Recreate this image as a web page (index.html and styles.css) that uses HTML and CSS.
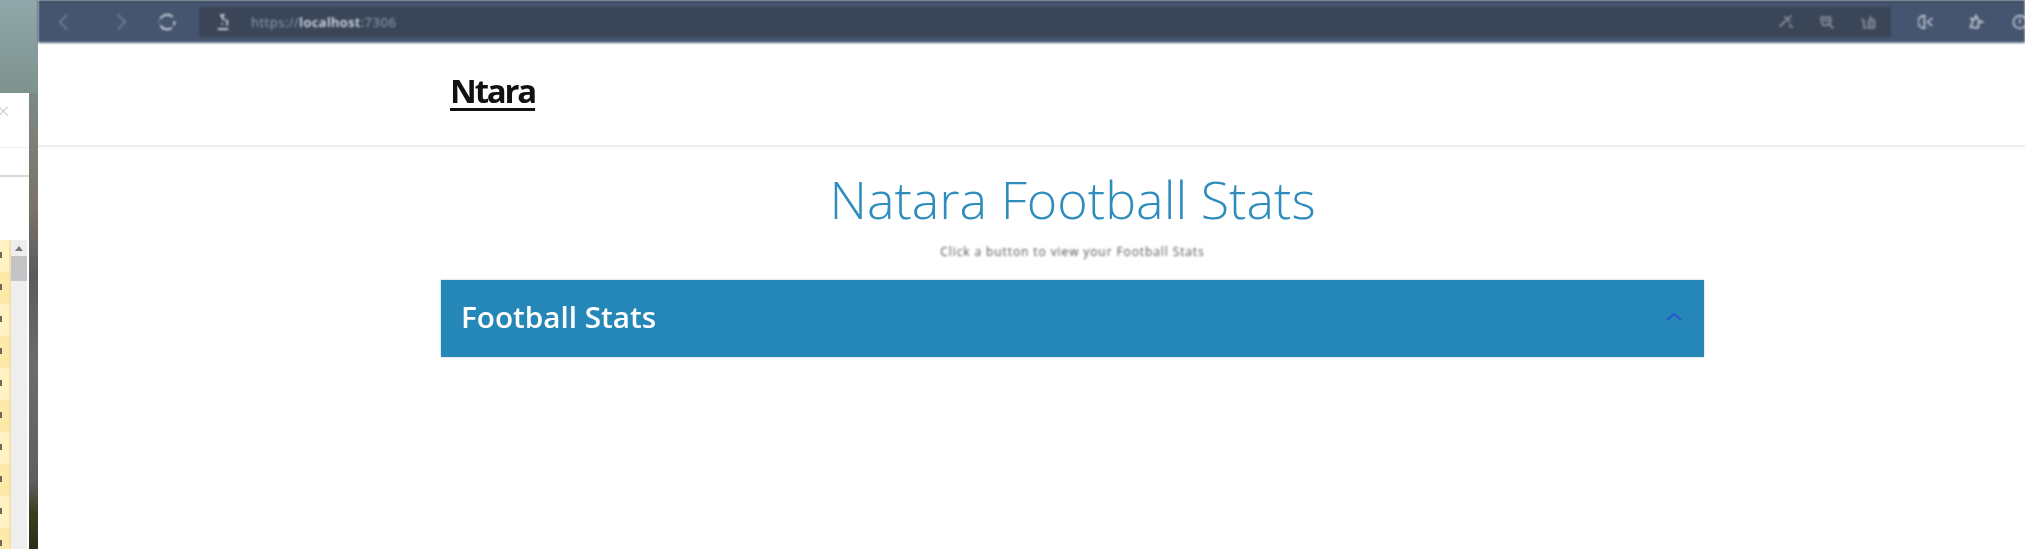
FILE: index.html
```html
<!DOCTYPE html>
<html lang="en">
<head>
  <meta charset="UTF-8" />
  <title>Natara Football Stats</title>
  <link rel="stylesheet" href="styles.css">
</head>
<body>

  <!-- desktop strip with the window behind the browser -->
  <aside class="desktop">
    <div class="back-window">
      <div class="back-close">&times;</div>
      <div class="back-tabs"></div>
      <div class="back-sheet">
        <div class="back-cells"></div>
        <div class="back-scroll">
          <div class="scroll-arrow"></div>
          <div class="scroll-thumb"></div>
        </div>
      </div>
    </div>
    <div class="desktop-edge"></div>
  </aside>

  <div class="browser">
    <div class="toolbar">
      <svg class="tool tool-back" viewBox="0 0 16 24"><path d="M12 3 L3 12 L12 21" /></svg>
      <svg class="tool tool-forward" viewBox="0 0 16 24"><path d="M4 3 L13 12 L4 21" /></svg>
      <svg class="tool tool-reload" viewBox="0 0 24 24"><path d="M4 8 A9.500 9.500 0 0 1 19 6 M21 11 A9.500 9.500 0 0 1 20 16 M18 19 A9.500 9.500 0 0 1 4 16 M2 12 L2 11" /></svg>
      <div class="address">
        <svg class="addr-lock" viewBox="0 0 16 20"><path d="M5 2 H10 M6 2 L9 8 M11 7 A5 5 0 0 1 12 14 M6 12 H8 M2 18 H14" /></svg>
        <span class="url">https://<b>localhost</b>:7306</span>
        <div class="addr-icons">
          <svg class="tool-sm" viewBox="0 0 20 20"><path d="M2 16 L10 8 M8 3 L15 10 M12 6 L17 2 M14 13 L18 17" /></svg>
          <svg class="tool-sm" viewBox="0 0 20 20"><path d="M3 4 H14 L15 10 L10 14 H5 L3 9 Z M5 8 H13 M13 13 L18 18" /></svg>
          <svg class="tool-sm" viewBox="0 0 20 20"><path d="M2 6 L5 9 V17 H9 M11 8 H18 V17 H11 Z M13 13 H16 M12 3 L15 6" /></svg>
        </div>
      </div>
      <div class="browser-icons">
        <svg class="tool-sm tool-split" viewBox="0 0 20 20"><path d="M8 2 A8 8 0 0 0 8 18 Z M11 3 L11 3.500 M18 5 L12 10 L18 15 M12 17 L12 17.500" /></svg>
        <div class="tool-divider"></div>
        <svg class="tool-sm" viewBox="0 0 20 20"><path d="M10 2 L13 8 L18 10 L13 11 L13 17 H8 L3 16 L6 10 L4 6 L8 7 Z" /></svg>
        <svg class="tool-sm tool-last" viewBox="0 0 20 20"><circle cx="11" cy="10" r="8" /><path d="M11 6 V12" /></svg>
      </div>
    </div>

    <nav class="navegacion">
      <a href="#" class="logo">Ntara</a>
    </nav>

    <section class="contenido">
      <h1>Natara Football Stats</h1>
      <p class="lead">Click a button to view your Football Stats</p>
      <div class="panel">
        <span class="panel-title">Football Stats</span>
        <svg class="panel-chevron" viewBox="0 0 16 10"><path d="M1 8 L8 2 L15 8" /></svg>
      </div>
    </section>
  </div>

</body>
</html>
```
FILE: styles.css
```css
html, body {
  height: 100%;
}

body {
  margin: 0;
  display: flex;
  overflow: hidden;
  background-color: #fff;
  font-family: 'Open Sans', sans-serif;
}

/* Left strip */
.desktop {
  width: 38px;
  flex: none;
  display: flex;
  flex-direction: column;
  padding-top: 93px;
  box-sizing: border-box;
  background: linear-gradient(#90a8aa, #7d918c 100px);
  position: relative;
  filter: blur(0.7px);
}

.back-window {
  width: 29px;
  flex: 1;
  display: flex;
  flex-direction: column;
  background-color: #fff;
}

.desktop-edge {
  position: absolute;
  top: 93px;
  bottom: 0;
  left: 29px;
  width: 9px;
  background: linear-gradient(#7d8a84, #7a7368 25%, #5c5a5e 40%, #6c6b70 60%, #5f5f63 85%, #38401f 92%, #2f2a1c);
}

.back-close {
  height: 54px;
  color: #c4c4c4;
  font-size: 22px;
  line-height: 34px;
  font-weight: 300;
  margin-left: -3px;
  border-bottom: 1px solid #f0f0f0;
}

.back-tabs {
  height: 27px;
  border-bottom: 2px solid #d8d8d8;
}

.back-sheet {
  flex: 1;
  display: flex;
  padding-top: 0;
}

.back-cells {
  width: 9px;
  margin-top: 63px;
  background:
    repeating-linear-gradient(transparent 0 12px, #6a6a5a 12px 18px, transparent 18px 32px) 0 0 / 2px 100% no-repeat,
    repeating-linear-gradient(#fff3c4 0 32px, #fdeaa8 32px 64px);
  border-right: 2px solid #f6dfa8;
  position: relative;
}

.back-scroll {
  width: 16px;
  background-color: #eeeeef;
  margin-top: 63px;
}

.scroll-arrow {
  width: 0;
  height: 0;
  margin: 6px auto 5px;
  border-left: 4px solid transparent;
  border-right: 4px solid transparent;
  border-bottom: 5px solid #777;
}

.scroll-thumb {
  height: 25px;
  background-color: #c4c4c6;
}

/* Browser */
.browser {
  flex: 1;
  min-width: 0;
  display: flex;
  flex-direction: column;
}

.toolbar {
  height: 43px;
  flex: none;
  box-sizing: border-box;
  display: flex;
  align-items: center;
  background-color: #45556f;
  border-top: 2px solid #36435a;
  border-bottom: 2px solid #5d6b83;
  padding-left: 18px;
  filter: blur(0.8px);
}

.toolbar svg {
  fill: none;
  stroke: #d5dae2;
  stroke-width: 2;
}

.tool {
  width: 16px;
  height: 20px;
  flex: none;
}

.toolbar .tool-back,
.toolbar .tool-forward {
  stroke: #76839a;
}

.tool-back {
  margin-right: 41px;
}

.tool-forward {
  margin-right: 28px;
}

.toolbar .tool-reload {
  width: 20px;
  stroke: #e4e7ec;
  margin-right: 22px;
}

.address {
  flex: 1;
  height: 30px;
  display: flex;
  align-items: center;
  background-color: #3a4558;
  padding-left: 17px;
  min-width: 0;
}

.addr-lock {
  width: 14px;
  height: 18px;
  flex: none;
  margin-right: 21px;
}

.url {
  font-size: 13px;
  color: #8ea5b8;
  letter-spacing: 0.5px;
}

.url b {
  color: #e6eef5;
  font-weight: 600;
}

.addr-icons {
  margin-left: auto;
  display: flex;
  gap: 25px;
  padding-right: 15px;
}

.toolbar .tool-sm {
  width: 16px;
  height: 16px;
  flex: none;
  stroke: #8f99a8;
}

.browser-icons {
  width: 134px;
  flex: none;
  display: flex;
  align-items: center;
  padding-left: 27px;
  box-sizing: border-box;
  overflow: hidden;
}

.toolbar .tool-split {
  stroke: #dfe3e9;
  margin-right: 16px;
}

.tool-divider {
  width: 2px;
  height: 16px;
  background-color: #5e6c84;
  margin-right: 18px;
}

.toolbar .browser-icons .tool-sm {
  stroke: #c7cdd6;
}

.tool-last {
  margin-left: 27px;
}

/* Page */
.navegacion {
  height: 104px;
  flex: none;
  box-sizing: border-box;
  display: flex;
  align-items: center;
  padding: 0 0 7px 412px;
  border-bottom: 2px solid #eceef0;
  box-shadow: 0 1px 3px rgba(0,0,0,0.04);
}

.logo {
  color: #111;
  font-size: 33px;
  font-weight: 700;
  letter-spacing: -2.200px;
  text-underline-offset: 5px;
  filter: blur(0.5px);
}

.contenido {
  width: 1263px;
  margin-left: 403px;
  text-align: center;
}

h1 {
  margin: 22px 0 0;
  color: #2f8dbe;
  font-size: 52px;
  line-height: 60px;
  font-weight: 300;
  filter: blur(0.6px);
}

.lead {
  margin: 15px 0 20px;
  color: #555;
  font-size: 12px;
  line-height: 16px;
  letter-spacing: 0.9px;
  filter: blur(0.8px);
}

.panel {
  height: 77px;
  display: flex;
  align-items: center;
  justify-content: space-between;
  box-sizing: border-box;
  padding: 0 22px 0 20px;
  background-color: #2586b8;
  box-shadow: 0 0 2px rgba(0,0,0,0.25);
}

.panel-title {
  color: #fff;
  font-size: 29.700px;
  font-weight: 600;
  margin-bottom: 4px;
  filter: blur(0.5px);
}

.panel-chevron {
  width: 16px;
  height: 10px;
  fill: none;
  stroke: #2a55d0;
  stroke-width: 2;
  margin-bottom: 4px;
  filter: blur(0.5px);
}
```
